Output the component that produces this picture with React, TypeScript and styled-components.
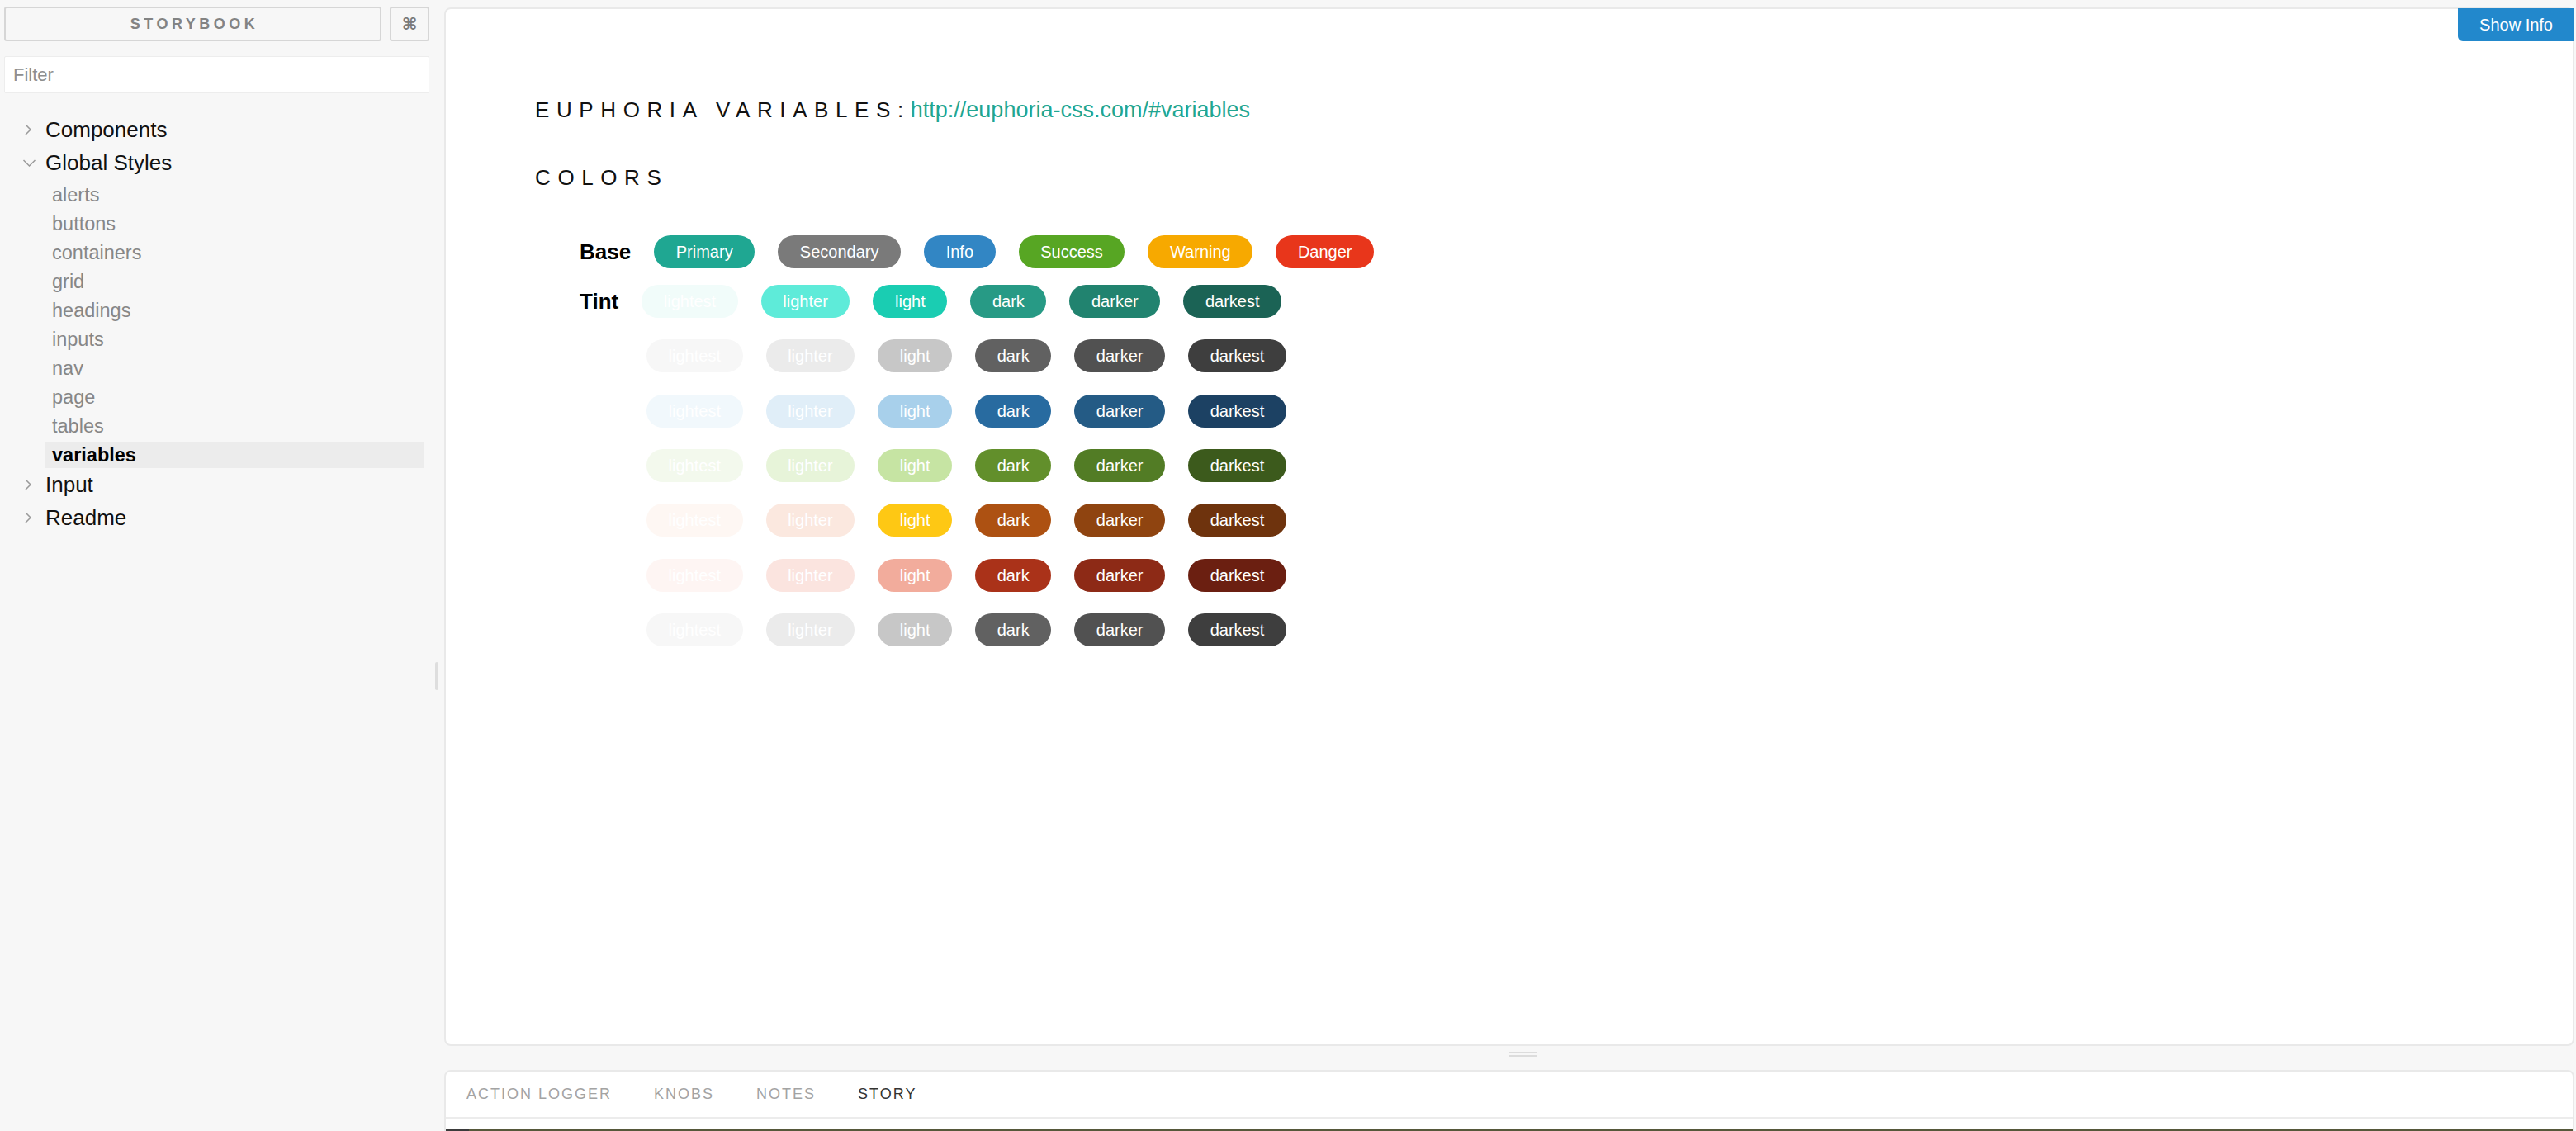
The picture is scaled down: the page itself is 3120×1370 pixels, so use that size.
import styled, { createGlobalStyle } from "styled-components";

const GlobalStyle = createGlobalStyle`
  html, body {
    margin: 0;
    background: #f7f7f7;
    font-family: "Liberation Sans", Arial, sans-serif;
  }
  #root {
    height: 100vh;
    overflow: hidden;
  }
`;

const Layout = styled.div`
  display: flex;
  align-items: flex-start;
  height: 100vh;
  overflow: hidden;
`;

/* ---------- sidebar ---------- */

const Sidebar = styled.aside`
  flex: none;
  width: 520px;
  box-sizing: border-box;
  padding: 8px 0 0 5px;
`;

const HeaderRow = styled.div`
  display: flex;
  gap: 10px;
`;

const BrandButton = styled.button`
  flex: 1;
  height: 42px;
  border: 2px solid #d6d6d6;
  border-radius: 3px;
  background: #f7f7f7;
  color: #838383;
  font-family: "Liberation Sans", Arial, sans-serif;
  font-size: 18px;
  font-weight: 700;
  letter-spacing: 4.5px;
  padding: 0 0 0 4px;
`;

const ShortcutButton = styled.button`
  flex: none;
  width: 48px;
  height: 42px;
  border: 2px solid #d6d6d6;
  border-radius: 3px;
  background: #f7f7f7;
  color: #7a7a7a;
  font-family: "DejaVu Sans", sans-serif;
  font-size: 20px;
  font-weight: 700;
  padding: 0;
`;

const FilterInput = styled.input`
  display: block;
  width: 100%;
  height: 45px;
  margin-top: 18px;
  box-sizing: border-box;
  border: 1px solid #ededed;
  border-radius: 2px;
  background: #fff;
  padding: 0 10px;
  font-family: "Liberation Sans", Arial, sans-serif;
  font-size: 22px;
  color: #333;
  outline: none;

  &::placeholder {
    color: #8e8e8e;
  }
`;

const Tree = styled.ul`
  list-style: none;
  margin: 24px 0 0;
  padding: 0;
`;

const Kind = styled.li`
  display: flex;
  align-items: center;
  height: 40px;
  padding-left: 22px;
  font-size: 26px;
  color: #111;
`;

const Chevron = styled.svg`
  flex: none;
  width: 16px;
  height: 16px;
  margin-right: 12px;
`;

const Stories = styled.ul`
  list-style: none;
  margin: 0;
  padding: 0;
`;

const Story = styled.li<{ $selected?: boolean }>`
  height: 32px;
  line-height: 32px;
  margin: 3px 7px 0 49px;
  padding-left: 9px;
  font-size: 23.5px;
  color: ${(p) => (p.$selected ? "#000" : "#878787")};
  font-weight: ${(p) => (p.$selected ? 700 : 400)};
  background: ${(p) => (p.$selected ? "#ececec" : "transparent")};
`;

const Resizer = styled.div`
  flex: none;
  width: 18px;
  height: 1638px;
  display: flex;
  align-items: center;
  justify-content: center;
`;

const ResizeGrip = styled.div`
  width: 4px;
  height: 34px;
  border-radius: 2px;
  background: #dedede;
`;

/* ---------- main area ---------- */

const MainColumn = styled.main`
  flex: 1;
  min-width: 0;
  height: 100vh;
  box-sizing: border-box;
  padding: 9px 2px 0 0;
  display: flex;
  flex-direction: column;
`;

const PreviewPanel = styled.section`
  position: relative;
  flex: none;
  height: 1258px;
  box-sizing: border-box;
  border: 2px solid #e9e9e9;
  border-radius: 8px;
  background: #fff;
  padding: 107px 40px 0 108px;
`;

const InfoButton = styled.button`
  position: absolute;
  top: -1px;
  right: -2px;
  height: 40px;
  padding: 0 26px;
  border: none;
  border-radius: 0 0 0 6px;
  background: #2288cc;
  color: #fff;
  font-family: "Liberation Sans", Arial, sans-serif;
  font-size: 20px;
`;

const Title = styled.h1<{ $gap?: number }>`
  margin: ${(p) => p.$gap ?? 0}px 0 0;
  font-size: 26px;
  font-weight: 400;
  line-height: 30px;
  letter-spacing: 8.6px;
  color: #111;
`;

const TitleLink = styled.a`
  font-size: 27px;
  letter-spacing: 0;
  color: #1fa692;
  text-decoration: none;
`;

const Swatches = styled.div`
  margin: 55px 0 0 54px;
  display: flex;
  flex-direction: column;
`;

const TintGroup = styled.div`
  display: flex;
  flex-direction: column;
  gap: 26.33px;
`;

const SwatchRow = styled.div<{ $indent?: number; $after?: number }>`
  display: flex;
  align-items: center;
  gap: 28px;
  padding-left: ${(p) => p.$indent ?? 0}px;
  margin-bottom: ${(p) => p.$after ?? 0}px;
`;

const RowLabel = styled.span`
  font-size: 26px;
  font-weight: 700;
  color: #000;
`;

const Pill = styled.span<{ $bg: string }>`
  height: 40px;
  line-height: 41px;
  padding: 0 26.6px;
  border-radius: 20px;
  background: ${(p) => p.$bg};
  color: #fff;
  font-size: 20px;
  white-space: nowrap;
`;

const Splitter = styled.div`
  flex: none;
  height: 29px;
  box-sizing: border-box;
  padding: 7px 0 0 34px;
  display: flex;
  justify-content: center;
`;

const SplitGrip = styled.div`
  width: 34px;
  height: 2px;
  border-top: 2px solid #dcdcdc;
  border-bottom: 2px solid #dcdcdc;
`;

const BottomPanel = styled.section`
  flex: none;
  height: 300px;
  box-sizing: border-box;
  border: 2px solid #e9e9e9;
  border-radius: 8px 8px 0 0;
  background: #fff;
`;

const TabBar = styled.nav`
  height: 55px;
  display: flex;
  align-items: center;
  gap: 51px;
  padding-left: 25px;
  border-bottom: 2px solid #ececec;
`;

const Tab = styled.span<{ $active?: boolean }>`
  font-size: 18px;
  letter-spacing: 2px;
  color: ${(p) => (p.$active ? "#333" : "#a3a3a3")};
`;

const LoggerStrip = styled.div`
  margin-top: 12px;
  height: 60px;
  display: flex;
`;

const LoggerPart = styled.div<{ $bg: string; $width?: number }>`
  background: ${(p) => p.$bg};
  flex: ${(p) => (p.$width ? `0 0 ${p.$width}px` : "1")};
`;

/* ---------- data ---------- */

const baseColors = [
  { name: "Primary", color: "#1fa792" },
  { name: "Secondary", color: "#7a7a7a" },
  { name: "Info", color: "#3286c4" },
  { name: "Success", color: "#57a623" },
  { name: "Warning", color: "#f7a900" },
  { name: "Danger", color: "#e8361b" },
];

const tintNames = ["lightest", "lighter", "light", "dark", "darker", "darkest"];

const gray = ["#f7f7f7", "#ebebeb", "#c7c7c7", "#616161", "#515151", "#3e3e3e"];

const tints = [
  ["#f1fcfa", "#5eebd9", "#1acdb2", "#279a85", "#21836f", "#1b6355"],
  gray,
  ["#f1f8fc", "#e0eef8", "#a8d0eb", "#286ba0", "#245b85", "#1c4163"],
  ["#f3f9ed", "#e7f4d9", "#c6e4a3", "#628f2b", "#527c25", "#3c5a1c"],
  ["#fef7f3", "#fbe8df", "#fec814", "#ad5112", "#8f4410", "#6e330d"],
  ["#fef5f3", "#fbe4df", "#f2ac9c", "#aa3219", "#8d2a16", "#6b1f11"],
  gray,
];

const stories = [
  "alerts",
  "buttons",
  "containers",
  "grid",
  "headings",
  "inputs",
  "nav",
  "page",
  "tables",
  "variables",
];

const ChevronRight = () => (
  <Chevron viewBox="0 0 16 16">
    <path d="M4 2 L10 8 L4 14" fill="none" stroke="#9a9a9a" strokeWidth="1.5" />
  </Chevron>
);

const ChevronDown = () => (
  <Chevron viewBox="0 0 16 16">
    <path d="M1.5 5 L8.5 12 L15.5 5" fill="none" stroke="#9a9a9a" strokeWidth="1.5" />
  </Chevron>
);

const App = () => {
  return (
    <>
      <GlobalStyle />
      <Layout>
        <Sidebar>
          <HeaderRow>
            <BrandButton>STORYBOOK</BrandButton>
            <ShortcutButton>⌘</ShortcutButton>
          </HeaderRow>
          <FilterInput placeholder="Filter" />
          <Tree>
            <Kind>
              <ChevronRight />
              Components
            </Kind>
            <Kind>
              <ChevronDown />
              Global Styles
            </Kind>
            <Stories>
              {stories.map((s) => (
                <Story key={s} $selected={s === "variables"}>
                  {s}
                </Story>
              ))}
            </Stories>
            <Kind>
              <ChevronRight />
              Input
            </Kind>
            <Kind>
              <ChevronRight />
              Readme
            </Kind>
          </Tree>
        </Sidebar>

        <Resizer>
          <ResizeGrip />
        </Resizer>

        <MainColumn>
          <PreviewPanel>
            <InfoButton>Show Info</InfoButton>
            <Title>
              EUPHORIA VARIABLES:
              <TitleLink href="#variables">http://euphoria-css.com/#variables</TitleLink>
            </Title>
            <Title $gap={52}>COLORS</Title>
            <Swatches>
              <SwatchRow $after={20}>
                <RowLabel>Base</RowLabel>
                {baseColors.map((c) => (
                  <Pill key={c.name} $bg={c.color}>
                    {c.name}
                  </Pill>
                ))}
              </SwatchRow>
              <TintGroup>
                {tints.map((row, i) => (
                  <SwatchRow key={i} $indent={i === 0 ? 0 : 81}>
                    {i === 0 && <RowLabel>Tint</RowLabel>}
                    {row.map((color, j) => (
                      <Pill key={j} $bg={color}>
                        {tintNames[j]}
                      </Pill>
                    ))}
                  </SwatchRow>
                ))}
              </TintGroup>
            </Swatches>
          </PreviewPanel>

          <Splitter>
            <SplitGrip />
          </Splitter>

          <BottomPanel>
            <TabBar>
              <Tab>ACTION LOGGER</Tab>
              <Tab>KNOBS</Tab>
              <Tab>NOTES</Tab>
              <Tab $active>STORY</Tab>
            </TabBar>
            <LoggerStrip>
              <LoggerPart $bg="#3b3b3b" $width={28} />
              <LoggerPart $bg="#56583a" />
            </LoggerStrip>
          </BottomPanel>
        </MainColumn>
      </Layout>
    </>
  );
};

export default App;
